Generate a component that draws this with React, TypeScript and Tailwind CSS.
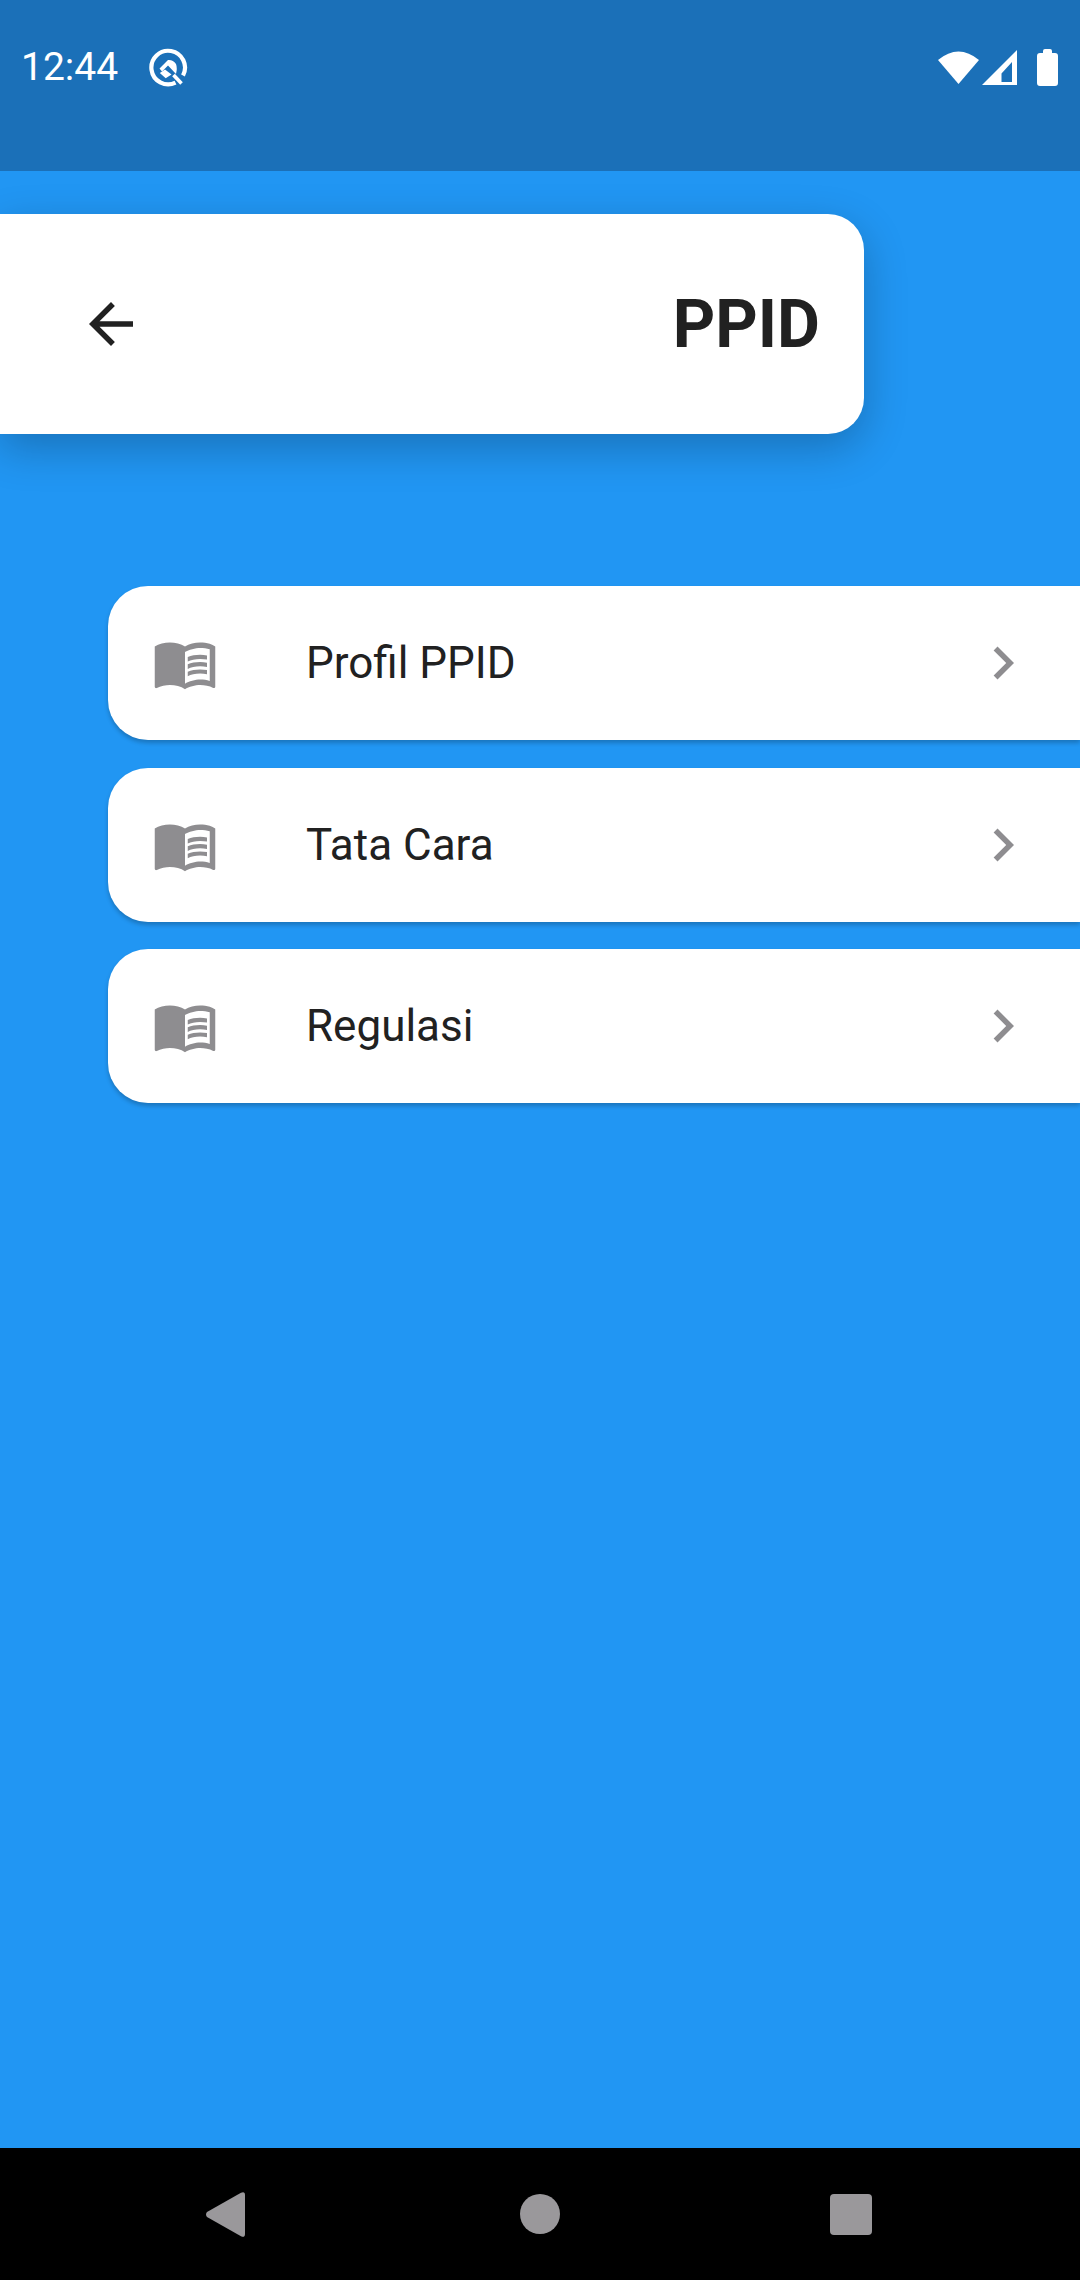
import { MdArrowBack, MdChevronRight, MdMenuBook } from "react-icons/md";

const menus = ["Profil PPID", "Tata Cara", "Regulasi"];

const QIcon = () => (
  <svg width="40" height="40" viewBox="0 0 40 40" fill="none">
    <path d="M27.500 34.700A16.800 16.800 0 1 1 35 27.500" stroke="white" strokeWidth="4.200" />
    <path d="M25.500 27 33.500 35.500" stroke="white" strokeWidth="3.600" />
    <path d="M11.500 20.500 20 12Q25 11.500 28 16Q29.500 20 28 26L20 17.500 14 23.500Z" fill="white" />
    <path d="M17 21.500 11.800 25 17.700 30.300 23.500 26.500Z" fill="white" />
  </svg>
);

const StatusBar = () => (
  <div className="h-[171px] shrink-0 bg-[#1b70b8] flex justify-between pl-[21px] pr-[22px] pt-[48px] text-white">
    <div className="flex items-start">
      <span className="text-[39px] leading-[39px] font-normal">12:44</span>
      <span className="ml-[30px]">
        <QIcon />
      </span>
    </div>
    <div className="flex items-start">
      <svg width="41" height="35" viewBox="0 0 41 35" className="mt-[2px]">
        <path d="M0 10Q20.500 -7 41 10L20.500 34Z" fill="white" />
      </svg>
      <svg width="35" height="35" viewBox="0 0 35 35" className="mt-[2px] ml-[3px]">
        <path fillRule="evenodd" d="M0 35 35 0V35ZM19.500 32H30V12L19.500 23.500Z" fill="white" />
      </svg>
      <svg width="21" height="37" viewBox="0 0 21 37" className="mt-[1px] ml-[20px]">
        <path d="M6 4V2Q6 0 8 0H13Q15 0 15 2V4H18Q21 4 21 7V34Q21 37 18 37H3Q0 37 0 34V7Q0 4 3 4Z" fill="white" />
      </svg>
    </div>
  </div>
);

const NavBar = () => (
  <div className="h-[132px] shrink-0 bg-black flex items-start pt-[44px]">
    <svg width="39" height="45" viewBox="0 0 39 45" className="ml-[206px]">
      <path d="M1 20 35 0.700Q39 -1 39 3V42Q39 46 35 44.300L1 25Q-1 22.500 1 20Z" fill="#9a989b" />
    </svg>
    <div className="ml-[275px] mt-[2px] w-10 h-10 rounded-full bg-[#9a989b]" />
    <div className="ml-[270px] mt-[2px] w-[42px] h-[41px] rounded-[4px] bg-[#9a989b]" />
  </div>
);

const MenuItem = ({ label }: { label: string }) => (
  <div className="h-[154px] rounded-l-[40px] bg-white flex items-center px-11 shadow-[0_3px_4px_rgba(0,0,0,0.22)]">
    <MdMenuBook size={66} color="#8e8d90" />
    <p className="ml-[88px] flex-1 text-[44px] text-[#212121]">{label}</p>
    <MdChevronRight size={66} color="#8e8d90" />
  </div>
);

export default function App() {
  return (
    <div className="h-[2280px] flex flex-col bg-[#2196f3] font-['Roboto',sans-serif] overflow-hidden">
      <StatusBar />
      <div className="flex-1">
        <div className="mt-[43px] w-[864px] h-[220px] rounded-r-[36px] bg-white flex items-center justify-between pl-[78px] pr-11 shadow-[0_14px_44px_rgba(0,0,0,0.24)]">
          <MdArrowBack size={66} color="#212121" />
          <p className="text-[66px] font-bold text-[#212121]">PPID</p>
        </div>
        <div className="mt-[152px] ml-[108px] flex flex-col gap-[27.5px]">
          {menus.map((m) => (
            <MenuItem key={m} label={m} />
          ))}
        </div>
      </div>
      <NavBar />
    </div>
  );
}
